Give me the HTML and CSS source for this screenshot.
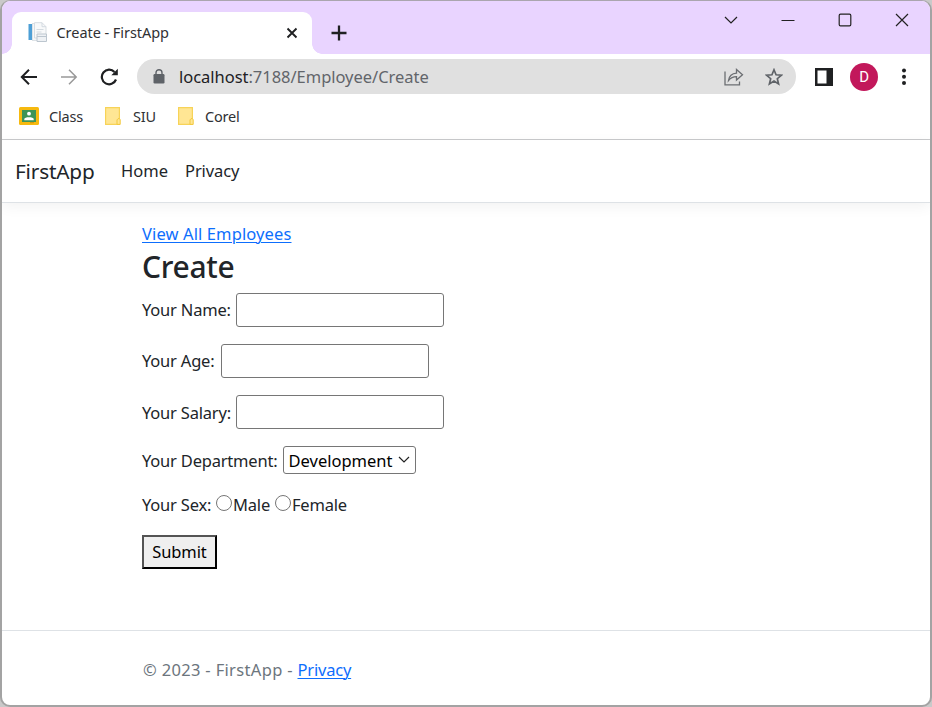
FILE: index.html
```html
<!DOCTYPE html>
<html lang="en">
<head>
<meta charset="utf-8">
<title>Create - FirstApp</title>
<link rel="stylesheet" href="styles.css">
</head>
<body>
<div class="window">
  <div class="titlebar">
    <div class="tab">
      <svg class="favicon" width="22" height="22" viewBox="0 0 22 22">
        <rect x="1.500" y="2" width="4" height="16" fill="#4d9fd6"/>
        <rect x="5.500" y="1.500" width="10" height="17" fill="#f5f7f9" stroke="#dde2e6"/>
        <path d="M7.500 .7h7.500l4 4V16h-11.500z" fill="#f8f9fa" stroke="#d7dde2"/>
        <path d="M15 .7v4h4M9.500 7.500h7M9.500 10h5" fill="none" stroke="#d3dae0"/>
        <path d="M10 12h9.500v7.500H10z" fill="#eef1f4" stroke="#bcc6cf"/>
        <path d="M10 14.500h9.500" stroke="#bcc6cf"/>
      </svg>
      <span class="tab-title">Create - FirstApp</span>
      <svg class="tab-close" width="12" height="12" viewBox="0 0 12 12"><path d="M1.500 1.500l9 9M10.500 1.500l-9 9" stroke="#1f2022" stroke-width="1.900"/></svg>
    </div>
    <svg class="new-tab" width="16" height="16" viewBox="0 0 16 16"><path d="M8 .5v15M.5 8h15" stroke="#1f2022" stroke-width="2.300"/></svg>
    <div class="controls">
      <svg width="14" height="14" viewBox="0 0 14 14"><path d="M1 4l6 6 6-6" fill="none" stroke="#222" stroke-width="1.200"/></svg>
      <svg width="14" height="14" viewBox="0 0 14 14"><path d="M.5 7.500h13" stroke="#222" stroke-width="1.200"/></svg>
      <svg width="14" height="14" viewBox="0 0 14 14"><rect x="1.200" y="1.200" width="11.600" height="11.600" rx="1.300" fill="none" stroke="#222" stroke-width="1.200"/></svg>
      <svg width="14" height="14" viewBox="0 0 14 14"><path d="M1 1l12 12M13 1L1 13" stroke="#222" stroke-width="1.200"/></svg>
    </div>
  </div>
  <div class="toolbar">
    <div class="history">
      <svg width="18" height="18" viewBox="0 0 18 18"><path d="M17 9H2M9 1.800L1.800 9 9 16.200" fill="none" stroke="#1f2022" stroke-width="2"/></svg>
      <svg width="18" height="18" viewBox="0 0 18 18"><path d="M1 9h15M9 1.800L16.200 9 9 16.200" fill="none" stroke="#999" stroke-width="1.500"/></svg>
      <svg width="18" height="18" viewBox="0 0 18 18"><path d="M16 11.500A7.300 7.300 0 1 1 14.500 4" fill="none" stroke="#1f2022" stroke-width="2.200"/><path d="M17.800 .8v6.500h-6.500z" fill="#1f2022"/></svg>
    </div>
    <div class="address">
      <svg class="lock" width="12" height="15" viewBox="0 0 12 15"><rect x=".5" y="5" width="11" height="9.500" rx="1.200" fill="#5f6368"/><path d="M3 5.500V3.700a3 3 0 0 1 6 0v1.800" fill="none" stroke="#5f6368" stroke-width="1.400"/></svg>
      <span class="url"><span class="host">localhost</span>:7188/Employee/Create</span>
      <svg class="share" width="20" height="20" viewBox="0 0 20 20"><path d="M1 4.500v13.300h14.500v-3.300M4.500 13.500C5.200 8.700 8.500 6.500 12.500 6.200V2.500l6 5.300-6 5.200V9.700C9 9.700 6.500 11 4.500 13.500z" fill="none" stroke="#6b6e72" stroke-width="1.300"/></svg>
      <svg class="star" width="18" height="18" viewBox="0 0 18 18"><path d="M9 1.800l2.050 5 5.350.43-4.080 3.470 1.270 5.230L9 13.100l-4.590 2.830 1.270-5.230L1.600 7.230l5.350-.43z" fill="none" stroke="#5f6368" stroke-width="1.700"/></svg>
    </div>
    <svg class="panel" width="18" height="18" viewBox="0 0 18 18"><path d="M0 0h18v18H0z" fill="#1f2022"/><path d="M2.500 2.500h9v13h-9z" fill="#fff"/></svg>
    <span class="avatar">D</span>
    <svg class="kebab" width="6" height="18" viewBox="0 0 6 18"><g fill="#1f2022"><circle cx="3" cy="2.500" r="2"/><circle cx="3" cy="8.800" r="2"/><circle cx="3" cy="15.100" r="2"/></g></svg>
  </div>
  <div class="bookmarks">
    <span class="bookmark class-mark"><svg width="20" height="18" viewBox="0 0 20 18"><rect width="20" height="18" rx="1.500" fill="#f6b90f"/><rect x="3" y="3" width="14" height="12" fill="#3d9457"/><circle cx="10" cy="6.700" r="1.900" fill="#fff"/><path d="M5.300 13.300v-1.300c0-2.300 9.400-2.300 9.400 0v1.300z" fill="#fff"/><path d="M11 15h4v1.300h-4z" fill="#d79a08"/></svg>Class</span>
    <span class="bookmark siu-mark"><svg width="16" height="18" viewBox="0 0 16 18"><path d="M.6.600h13.800v16.800H.6z" fill="#ffe694" stroke="#f7d358" stroke-width="1.200"/><path d="M12 17.400v-4.500l1-1.200h1.400l.8 1v4.700z" fill="#ffe694" stroke="#f2c83c"/></svg>SIU</span>
    <span class="bookmark corel-mark"><svg width="16" height="18" viewBox="0 0 16 18"><path d="M.6.600h13.800v16.800H.6z" fill="#ffe694" stroke="#f7d358" stroke-width="1.200"/><path d="M12 17.400v-4.500l1-1.200h1.400l.8 1v4.700z" fill="#ffe694" stroke="#f2c83c"/></svg>Corel</span>
  </div>
  <nav class="navbar">
    <a class="brand">FirstApp</a>
    <a class="nav-home">Home</a>
    <a class="nav-privacy">Privacy</a>
  </nav>
  <main class="content">
    <a class="link all-link" href="#">View All Employees</a>
    <h1>Create</h1>
    <form>
      <div class="field name-field"><label class="name-label" for="name">Your Name:</label><input class="text" id="name" type="text"></div>
      <div class="field"><label class="age-label" for="age">Your Age:</label><input class="text" id="age" type="text"></div>
      <div class="field salary-field"><label class="salary-label" for="salary">Your Salary:</label><input class="text" id="salary" type="text"></div>
      <div class="field dept-field"><label class="dept-label">Your Department:</label><div class="select"><span>Development</span><svg width="12" height="8" viewBox="0 0 12 8"><path d="M1 1l5 5 5-5" fill="none" stroke="#222" stroke-width="1.200"/></svg></div></div>
      <div class="field sex-field"><span class="sex-label">Your Sex:</span><i class="radio"></i><span class="male">Male</span><i class="radio"></i><span>Female</span></div>
      <button class="submit" type="button">Submit</button>
    </form>
  </main>
  <footer class="footer"><span class="copyright">© 2023 - FirstApp - </span><a class="link" href="#">Privacy</a></footer>
</div>
</body>
</html>
```

FILE: styles.css
```css
* { box-sizing: border-box; }
body {
  margin: 0;
  background: #c9c9c9;
  color: #212529;
  font: 16.5px/26px "Noto Sans", "Open Sans", sans-serif;
  letter-spacing: -0.2px;
  white-space: nowrap;
}
svg { display: block; flex: none; }
.window {
  display: flex;
  flex-direction: column;
  width: 932px;
  height: 707px;
  border: 2px solid #a3a3a3;
  border-top: 1px solid #aaa5ae;
  border-radius: 10px;
  overflow: hidden;
  background: #fff;
}
.titlebar {
  display: flex;
  flex: none;
  height: 53px;
  background: #e9d4ff;
}
.tab {
  position: relative;
  display: flex;
  align-items: center;
  width: 300px;
  height: 42px;
  margin: 11px 0 0 10px;
  padding: 0 14px 0 15px;
  border-radius: 9px 9px 0 0;
  background: #fff;
}
.tab::before, .tab::after {
  content: "";
  position: absolute;
  bottom: 0;
  width: 10px;
  height: 10px;
}
.tab::before { right: 100%; background: radial-gradient(circle at 0 0, transparent 9.5px, #fff 10px); }
.tab::after { left: 100%; background: radial-gradient(circle at 100% 0, transparent 9.5px, #fff 10px); }
.tab-title { margin: -2px 0 0 7.5px; font-size: 14.5px; letter-spacing: -0.05px; color: #303134; }
.tab-close { margin-left: auto; }
.new-tab { margin: 24px 0 0 19px; }
.controls { display: flex; gap: 43px; margin: 12px 21px 0 auto; }
.toolbar { display: flex; align-items: center; flex: none; height: 45px; }
.history { display: flex; gap: 22px; margin-left: 18px; }
.address {
  display: flex;
  align-items: center;
  width: 659px;
  height: 35px;
  margin-left: 19px;
  padding: 0 13px 0 16px;
  border-radius: 18px;
  background: #e0e0e0;
}
.url { margin-left: 14px; letter-spacing: -0.03px; color: #62656a; }
.host { color: #202124; }
.share { margin-left: auto; }
.star { margin-left: 21px; }
.panel { margin-left: 19px; }
.avatar {
  width: 28px;
  height: 28px;
  margin-left: 17px;
  border-radius: 50%;
  background: #c2185b;
  color: #fff;
  font: 15px/28px Roboto, sans-serif;
  text-align: center;
}
.kebab { margin-left: 23px; }
.bookmarks {
  display: flex;
  flex: none;
  height: 41px;
  padding-left: 17px;
  border-bottom: 1px solid #c9cacc;
  font-size: 14.5px;
  color: #303134;
}
.bookmark { display: flex; align-items: center; height: 34px; }
.class-mark { width: 86px; gap: 10px; }
.siu-mark { width: 73px; gap: 12px; }
.corel-mark { gap: 11px; }
.navbar {
  display: flex;
  align-items: center;
  flex: none;
  height: 63px;
  padding-left: 13px;
  border-bottom: 1px solid #dee2e6;
  box-shadow: 0 4px 13px rgba(0, 0, 0, .05);
}
.brand { width: 106px; font-size: 20.8px; }
.nav-home { width: 64px; letter-spacing: 0; }
.nav-privacy { letter-spacing: -0.1px; }
.content { flex: 1; padding: 18px 0 0 140px; }
.all-link { display: block; width: max-content; letter-spacing: 0.12px; }
.link { color: #0d6efd; text-decoration: underline; text-underline-offset: 2px; text-decoration-thickness: 1px; }
h1 { margin: 0; height: 46px; font-size: 30px; line-height: 39px; font-weight: 500; letter-spacing: -0.3px; }
.field { display: flex; align-items: center; height: 34px; margin-bottom: 17px; }
.name-label, .salary-label { width: 94px; }
.age-label { width: 78.500px; }
.dept-label { width: 140.500px; }
.text {
  width: 208px;
  height: 34px;
  border: 1px solid #767676;
  border-radius: 3px;
  background: #fff;
}
.salary-label, .dept-label { padding-top: 1px; }
.dept-field { height: 28px; margin-bottom: 18px; }
.select {
  display: flex;
  align-items: center;
  width: 133px;
  height: 28px;
  padding: 2px 5px 0;
  border: 1px solid #767676;
  border-radius: 3px;
  color: #000;
  letter-spacing: 0;
}
.select svg { margin: -3px 0 0 auto; }
.sex-field { height: 26px; margin-bottom: 17px; }
.sex-label { width: 74px; }
.radio { width: 16px; height: 16px; margin: -4px 1px 0 0; border: 1px solid #767676; border-radius: 50%; }
.male { width: 42px; }
.submit {
  width: 75px;
  height: 34px;
  padding: 0;
  border: 2px outset #000;
  background: #efefef;
  color: #000;
  font: inherit;
  letter-spacing: -0.1px;
}
.footer {
  display: flex;
  align-items: center;
  flex: none;
  height: 75px;
  padding: 3px 0 0 141px;
  border-top: 1px solid #dee2e6;
  color: #6c757d;
  white-space: pre;
}
.copyright { letter-spacing: 0.33px; }
```
